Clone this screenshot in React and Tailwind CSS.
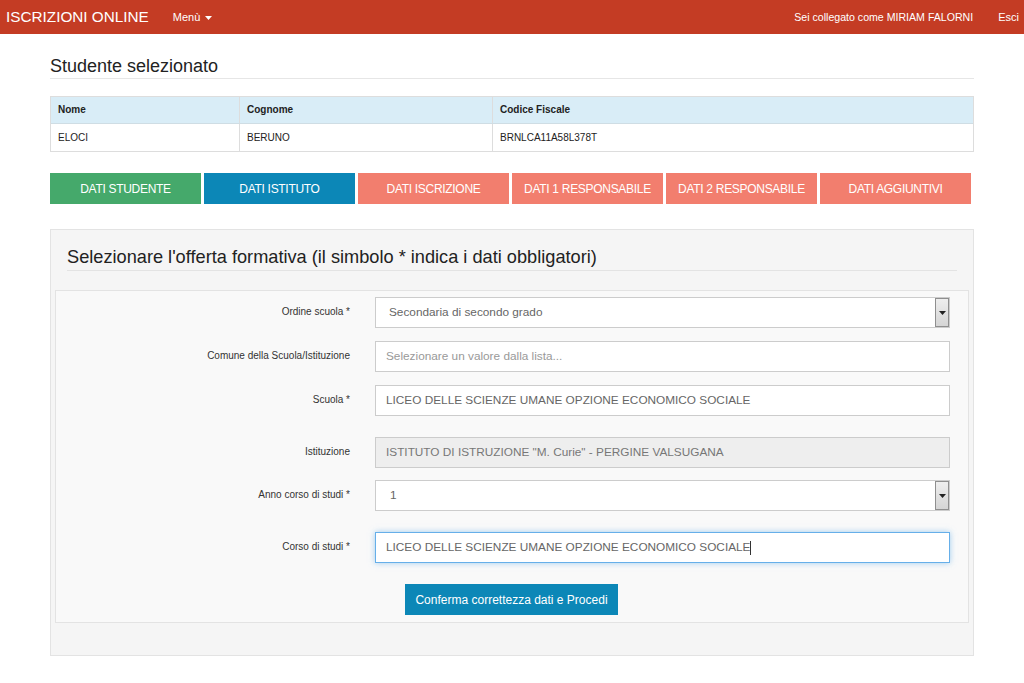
import React from "react";

const buttons = [
  { label: "DATI STUDENTE", cls: "bg-[#45a96b]" },
  { label: "DATI ISTITUTO", cls: "bg-[#0c87b7]" },
  { label: "DATI ISCRIZIONE", cls: "bg-[#f27e6e]" },
  { label: "DATI 1 RESPONSABILE", cls: "bg-[#f27e6e]" },
  { label: "DATI 2 RESPONSABILE", cls: "bg-[#f27e6e]" },
  { label: "DATI AGGIUNTIVI", cls: "bg-[#f27e6e]" },
];

const SelectArrow = () => (
  <div className="w-[14px] h-full border border-[#8f8f8f] bg-gradient-to-b from-[#eeeeee] to-[#d5d5d5] flex items-center justify-center">
    <svg width="7" height="4" viewBox="0 0 7 4">
      <path d="M0 0 L7 0 L3.5 4 Z" fill="#222" />
    </svg>
  </div>
);

const Row = ({ label, mt, children }) => (
  <div className={`flex ${mt}`}>
    <div className="w-[319px] pr-[25px] pt-[9px] text-right text-[10px] leading-[12px] text-[#333]">
      {label}
    </div>
    <div className="flex-1">{children}</div>
  </div>
);

export default function App() {
  return (
    <div className="min-h-[683px] bg-white font-['Liberation_Sans',Arial,sans-serif] text-[#333]">
      {/* Navbar */}
      <div className="h-[34px] bg-[#c43c24] flex items-center text-white">
        <div className="pl-[6px] text-[15.3px] leading-none">ISCRIZIONI ONLINE</div>
        <div className="ml-[24px] text-[11px] flex items-center gap-[5px] pt-[1px]">
          Menù
          <svg width="7" height="4" viewBox="0 0 7 4">
            <path d="M0 0 L7 0 L3.5 4 Z" fill="#fff" />
          </svg>
        </div>
        <div className="ml-auto text-[10.6px] pt-[1px]">Sei collegato come MIRIAM FALORNI</div>
        <div className="ml-[25px] mr-[5px] text-[11px] pt-[1px]">Esci</div>
      </div>

      <div className="mx-[50px]">
        <div className="pt-[22px] pb-[2px] border-b border-[#e6e6e6] text-[18px] leading-[20px] text-[#222]">
          Studente selezionato
        </div>

        {/* Table */}
        <div className="mt-[17px] border border-[#dddddd] text-[10px] leading-[12px]">
          <div className="flex h-[27px] bg-[#d9edf7] border-b border-[#cfdde4] font-bold text-[#222]">
            <div className="w-[189px] px-[7px] flex items-center border-r border-[#dddddd]">Nome</div>
            <div className="w-[253px] px-[7px] flex items-center border-r border-[#dddddd]">Cognome</div>
            <div className="flex-1 px-[7px] flex items-center">Codice Fiscale</div>
          </div>
          <div className="flex h-[27px] bg-white text-[#222]">
            <div className="w-[189px] px-[7px] flex items-center border-r border-[#dddddd]">ELOCI</div>
            <div className="w-[253px] px-[7px] flex items-center border-r border-[#dddddd]">BERUNO</div>
            <div className="flex-1 px-[7px] flex items-center">BRNLCA11A58L378T</div>
          </div>
        </div>

        {/* Step buttons */}
        <div className="mt-[21px] flex gap-[3px]">
          {buttons.map((b) => (
            <div
              key={b.label}
              className={`${b.cls} w-[151px] h-[31px] flex items-center justify-center text-white text-[12px] tracking-[-0.3px]`}
            >
              {b.label}
            </div>
          ))}
        </div>

        {/* Panel */}
        <div className="mt-[25px] border border-[#e3e3e3] bg-[#f5f5f5] px-[4px] pt-[16px] pb-[32px]">
          <div className="mx-[12px] pb-[2px] border-b border-[#e3e3e3] text-[18.2px] leading-[22px] text-[#222]">
            Selezionare l'offerta formativa (il simbolo * indica i dati obbligatori)
          </div>

          <div className="mt-[19px] border border-[#e3e3e3] bg-[#f9f9f9] pt-[6px] pb-[7px] pr-[18px] text-[11.8px]">
            <Row label="Ordine scuola *" mt="">
              <div className="h-[31px] flex border border-[#cccccc] bg-white pl-[13px] items-center">
                <span className="flex-1 text-[#666]">Secondaria di secondo grado</span>
                <SelectArrow />
              </div>
            </Row>
            <Row label="Comune della Scuola/Istituzione" mt="mt-[13px]">
              <div className="h-[31px] flex items-center border border-[#cccccc] bg-white pl-[10px] text-[#999]">
                Selezionare un valore dalla lista...
              </div>
            </Row>
            <Row label="Scuola *" mt="mt-[13px]">
              <div className="h-[31px] flex items-center border border-[#cccccc] bg-white pl-[10px] text-[#666]">
                LICEO DELLE SCIENZE UMANE OPZIONE ECONOMICO SOCIALE
              </div>
            </Row>
            <Row label="Istituzione" mt="mt-[21px]">
              <div className="h-[31px] flex items-center border border-[#cccccc] bg-[#eeeeee] pl-[10px] text-[#777]">
                ISTITUTO DI ISTRUZIONE "M. Curie" - PERGINE VALSUGANA
              </div>
            </Row>
            <Row label="Anno corso di studi *" mt="mt-[12px]">
              <div className="h-[31px] flex border border-[#cccccc] bg-white pl-[14px] items-center">
                <span className="flex-1 text-[#666]">1</span>
                <SelectArrow />
              </div>
            </Row>
            <Row label="Corso di studi *" mt="mt-[21px]">
              <div className="h-[31px] flex items-center border border-[#66afe9] bg-white pl-[10px] text-[#666] shadow-[0_0_6px_rgba(102,175,233,0.6)]">
                LICEO DELLE SCIENZE UMANE OPZIONE ECONOMICO SOCIALE
                <span className="w-px h-[14px] bg-[#333]" />
              </div>
            </Row>
            <div className="mt-[21px] pl-[349px]">
              <div className="w-[213px] h-[31px] bg-[#0c87b7] text-white text-[12px] flex items-center justify-center">
                Conferma correttezza dati e Procedi
              </div>
            </div>
          </div>
        </div>
      </div>
    </div>
  );
}
